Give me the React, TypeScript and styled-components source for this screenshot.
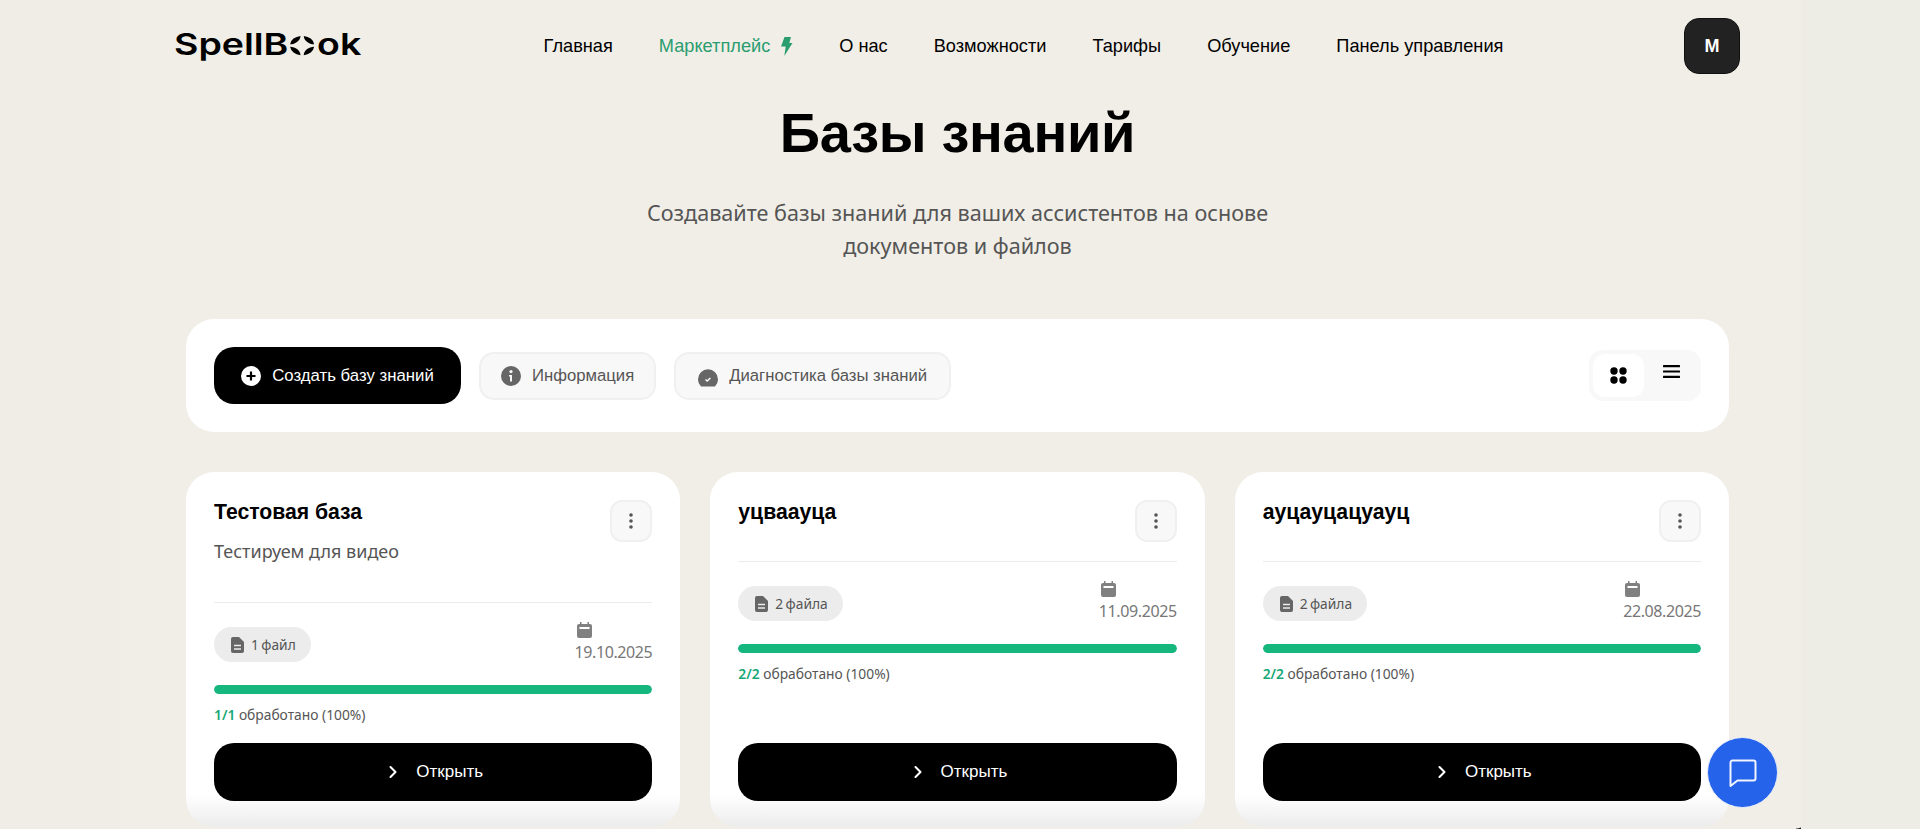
import React from "react";
import styled, { createGlobalStyle } from "styled-components";
import { ChevronRight } from "lucide-react";

const Global = createGlobalStyle`
  html, body { margin: 0; padding: 0; height: 829px; overflow: hidden; }
  body {
    background: linear-gradient(90deg, #efede5 0, #efede5 120px, #f1eee7 122px, #f1eee7 1800px, #eeede5 1802px);
    font-family: "Liberation Sans", Arial, sans-serif;
    color: #000;
  }
`;
const Page = styled.div`
  position: relative;
  height: 829px;
  overflow: hidden;
  padding: 0 191px 0 186px;
  box-sizing: border-box;
`;
const Header = styled.header`
  display: flex;
  align-items: center;
  justify-content: space-between;
  height: 92px;
  margin: 0 -11px 0 -10px;
`;
const Logo = styled.div`
  width: 187px;
`;
const LogoInner = styled.div`
  display: inline-flex;
  align-items: center;
  font-family: Inter, sans-serif;
  font-weight: 600;
  font-size: 30px;
  line-height: 1;
  transform: scaleX(1.25);
  transform-origin: left center;
  margin: -5px 0 0 -2px;
`;
const LogoMark = styled.svg`
  width: 21px;
  height: 23px;
  margin: 3px 1px 0;
`;
const Nav = styled.nav`
  display: flex;
  align-items: center;
  gap: 46px;
  font-size: 18.2px;
  padding-top: 1px;
`;
const NavItem = styled.a<{ $accent?: boolean }>`
  display: flex;
  align-items: center;
  gap: 10px;
  color: ${(p) => (p.$accent ? "#2a9d6f" : "#000")};
`;
const Avatar = styled.div`
  width: 56px;
  height: 56px;
  box-sizing: border-box;
  border-radius: 15px;
  background: #222;
  border: 1px solid #111;
  color: #fff;
  font-weight: 700;
  font-size: 18px;
  display: flex;
  align-items: center;
  justify-content: center;
`;
const Hero = styled.section`
  text-align: center;
  padding-top: 9px;
`;
const Title = styled.h1`
  margin: 0;
  font-size: 56px;
  line-height: 64px;
  font-weight: 700;
  letter-spacing: -0.3px;
`;
const Subtitle = styled.p`
  margin: 31px auto 0;
  width: 660px;
  font-family: "Noto Sans", sans-serif;
  font-size: 21.6px;
  line-height: 33px;
  color: #555;
`;
const Toolbar = styled.section`
  margin-top: 57px;
  height: 113px;
  box-sizing: border-box;
  background: #fff;
  border-radius: 28px;
  padding: 0 28px;
  display: flex;
  align-items: center;
  gap: 18px;
`;
const PrimaryButton = styled.button`
  height: 57px;
  width: 247px;
  border: 0;
  border-radius: 20px;
  background: #000;
  color: #fff;
  font: 16.8px "Liberation Sans", Arial, sans-serif;
  display: flex;
  align-items: center;
  justify-content: center;
  gap: 11px;
`;
const GhostButton = styled.button<{ $wide?: boolean }>`
  height: 48px;
  padding: 0 ${(p) => (p.$wide ? "22px" : "20px")};
  box-sizing: border-box;
  border: 2px solid #f0f0f0;
  border-radius: 15px;
  background: #f8f8f8;
  color: #555;
  font: 16.7px "Liberation Sans", Arial, sans-serif;
  display: flex;
  align-items: center;
  gap: 11px;
`;
const ViewToggle = styled.div`
  margin-left: auto;
  width: 112px;
  height: 51px;
  box-sizing: border-box;
  padding: 4px;
  border-radius: 14px;
  background: #f8f8f8;
  display: flex;
  gap: 2px;
`;
const ViewOption = styled.div<{ $active?: boolean }>`
  width: 52px;
  height: 43px;
  border-radius: 12px;
  background: ${(p) => (p.$active ? "#fff" : "transparent")};
  display: flex;
  align-items: center;
  justify-content: center;
  ${(p) => (p.$active ? "" : "padding-bottom: 8px; box-sizing: border-box;")}
`;
const Cards = styled.section`
  margin-top: 40px;
  display: grid;
  grid-template-columns: repeat(3, 1fr);
  gap: 30px;
`;
const Card = styled.article`
  height: 355px;
  box-sizing: border-box;
  border-radius: 28px;
  padding: 28px 28px 0;
  background: linear-gradient(180deg, #fff 0, #fff 322px, #ececec 100%);
  display: flex;
  flex-direction: column;
`;
const CardHead = styled.div`
  display: flex;
  justify-content: space-between;
  align-items: flex-start;
  padding-bottom: 19px;
  border-bottom: 1px solid #ebebeb;
`;
const CardTitle = styled.h2`
  margin: 0;
  font-size: 21.2px;
  line-height: 24px;
  font-weight: 700;
`;
const CardDesc = styled.p`
  margin: 14px 0 19px;
  font-family: "Noto Sans", sans-serif;
  font-size: 18px;
  line-height: 26px;
  color: #555;
`;
const Kebab = styled.button`
  width: 42px;
  height: 42px;
  flex: none;
  box-sizing: border-box;
  border: 2px solid #f0f0f0;
  border-radius: 12px;
  background: #f8f8f8;
  padding: 0;
  display: flex;
  align-items: center;
  justify-content: center;
`;
const Meta = styled.div`
  margin-top: 21px;
  display: flex;
  justify-content: space-between;
  align-items: flex-end;
`;
const FilePill = styled.div`
  height: 35px;
  padding: 0 15px 0 17px;
  border-radius: 18px;
  background: #ececec;
  color: #555;
  font-family: "Noto Sans", sans-serif;
  font-size: 13.8px;
  word-spacing: -1.2px;
  display: flex;
  align-items: center;
  gap: 7px;
`;
const DateBlock = styled.div`
  display: flex;
  flex-direction: column;
  align-items: flex-start;
  color: #777;
  font-family: "Noto Sans", sans-serif;
  font-size: 16px;
  letter-spacing: -0.4px;
  line-height: 20px;
  gap: 4px;
  margin-top: -2px;
  svg { margin-left: 2px; }
`;
const ProgressBar = styled.div`
  margin-top: 23px;
  height: 9px;
  border-radius: 5px;
  background: #e8e8e8;
  overflow: hidden;
`;
const ProgressFill = styled.div`
  height: 100%;
  background: #16b67f;
  border-radius: 5px;
`;
const ProgressText = styled.div`
  margin-top: 12px;
  font-family: "Noto Sans", sans-serif;
  font-size: 13.8px;
  line-height: 18px;
  color: #555;
  b { color: #16a876; font-weight: 600; }
`;
const OpenButton = styled.button`
  margin-top: auto;
  margin-bottom: 26px;
  height: 58px;
  flex: none;
  border: 0;
  border-radius: 20px;
  background: #000;
  color: #fff;
  font: 17px "Liberation Sans", Arial, sans-serif;
  display: flex;
  align-items: center;
  justify-content: center;
  gap: 13px;
`;
const ChatFab = styled.button`
  position: absolute;
  left: 1707px;
  top: 737px;
  width: 71px;
  height: 71px;
  box-sizing: border-box;
  border-radius: 50%;
  border: 1px solid #e9edf8;
  background: #2563eb;
  color: #fff;
  padding: 0;
  display: flex;
  align-items: center;
  justify-content: center;
`;
const WindowCorner = styled.div`
  position: absolute;
  left: 1796px;
  top: 817px;
  width: 5px;
  height: 12px;
  background: radial-gradient(circle at 0 0, transparent 11px, #222 12px);
`;

const Bolt = () => (
  <svg width="13" height="19" viewBox="0 0 12 19">
    <path d="M4 0h6.500L8.800 6H12L3.800 19l1.400-9.500H0.500z" fill="#2a9d6f" />
  </svg>
);
const PlusIcon = () => (
  <svg width="20" height="20" viewBox="0 0 20 20">
    <circle cx="10" cy="10" r="10" fill="#fff" />
    <path d="M10 5.500v9M5.500 10h9" stroke="#000" strokeWidth="2.200" />
  </svg>
);
const InfoIcon = () => (
  <svg width="20" height="20" viewBox="0 0 20 20">
    <circle cx="10" cy="10" r="10" fill="#666" />
    <circle cx="10" cy="5.600" r="1.600" fill="#f8f8f8" />
    <path d="M8 9h3v6.500H9V10.500H8z" fill="#f8f8f8" />
  </svg>
);
const DiagIcon = () => (
  <svg width="20" height="20" viewBox="0 0 20 20" style={{ marginTop: 4 }}>
    <path d="M3 18.500A10 10 0 1 1 17 18.500z" fill="#666" />
    <path d="M7.500 11.500l1.700 1.500 3.200-3" stroke="#fff" strokeWidth="1.500" fill="none" />
  </svg>
);
const FileIcon = () => (
  <svg width="13" height="16" viewBox="0 0 13 16">
    <path d="M2 0h6l5 5v9a2 2 0 0 1-2 2H2a2 2 0 0 1-2-2V2a2 2 0 0 1 2-2z" fill="#666" />
    <path d="M3 8.500h7M3 12h7" stroke="#ececec" strokeWidth="1.600" />
  </svg>
);
const CalendarIcon = () => (
  <svg width="15" height="16" viewBox="0 0 15 16">
    <path d="M3 0h1.500v2h6V0H12v2h1a2 2 0 0 1 2 2v10a2 2 0 0 1-2 2H2a2 2 0 0 1-2-2V4a2 2 0 0 1 2-2h1z" fill="#808080" />
    <rect x="2.500" y="5" width="10" height="2" fill="#fff" />
  </svg>
);
const DotsIcon = () => (
  <svg width="4" height="16" viewBox="0 0 4 16">
    <circle cx="2" cy="2" r="1.800" fill="#555" />
    <circle cx="2" cy="8" r="1.800" fill="#555" />
    <circle cx="2" cy="14" r="1.800" fill="#555" />
  </svg>
);
const GridIcon = () => (
  <svg width="17" height="17" viewBox="0 0 17 17">
    <circle cx="4" cy="4" r="3.700" />
    <circle cx="13" cy="4" r="3.700" />
    <circle cx="4" cy="13" r="3.700" />
    <circle cx="13" cy="13" r="3.700" />
  </svg>
);
const ListIcon = () => (
  <svg width="17" height="13" viewBox="0 0 17 13">
    <rect width="17" height="2.200" y="0" rx="0.500" />
    <rect width="17" height="2.200" y="5.400" rx="0.500" />
    <rect width="17" height="2.200" y="10.800" rx="0.500" />
  </svg>
);
const ChatIcon = () => (
  <svg width="30" height="28" viewBox="0 0 30 28" fill="none">
    <path
      d="M4.500 1.500h21a2 2 0 0 1 2 2v16a2 2 0 0 1-2 2H9.500L2.500 27V3.500a2 2 0 0 1 2-2z"
      stroke="#f1f5ff"
      strokeWidth="2"
      strokeLinejoin="round"
    />
  </svg>
);

const cards = [
  { title: "Тестовая база", desc: "Тестируем для видео", files: "1 файл", date: "19.10.2025", done: "1/1" },
  { title: "уцваауца", files: "2 файла", date: "11.09.2025", done: "2/2" },
  { title: "ауцауцацуауц", files: "2 файла", date: "22.08.2025", done: "2/2" },
];

export default function App() {
  return (
    <Page>
      <Global />
      <Header>
        <Logo>
          <LogoInner>
            SpellB
            <LogoMark viewBox="0 0 24 24">
              <path d="M10.500 1A11 11 0 0 0 1 10.500C6 10.500 10.500 6 10.500 1zM13.500 1A11 11 0 0 1 23 10.500C18 10.500 13.500 6 13.500 1zM10.500 23A11 11 0 0 1 1 13.500C6 13.500 10.500 18 10.500 23zM13.500 23A11 11 0 0 0 23 13.500C18 13.500 13.500 18 13.500 23z" />
            </LogoMark>
            ok
          </LogoInner>
        </Logo>
        <Nav>
          <NavItem>Главная</NavItem>
          <NavItem $accent>
            Маркетплейс <Bolt />
          </NavItem>
          <NavItem>О нас</NavItem>
          <NavItem>Возможности</NavItem>
          <NavItem>Тарифы</NavItem>
          <NavItem>Обучение</NavItem>
          <NavItem>Панель управления</NavItem>
        </Nav>
        <Avatar>М</Avatar>
      </Header>
      <Hero>
        <Title>Базы знаний</Title>
        <Subtitle>
          Создавайте базы знаний для ваших ассистентов на основе документов и файлов
        </Subtitle>
      </Hero>
      <Toolbar>
        <PrimaryButton>
          <PlusIcon /> Создать базу знаний
        </PrimaryButton>
        <GhostButton>
          <InfoIcon /> Информация
        </GhostButton>
        <GhostButton $wide>
          <DiagIcon /> Диагностика базы знаний
        </GhostButton>
        <ViewToggle>
          <ViewOption $active>
            <GridIcon />
          </ViewOption>
          <ViewOption>
            <ListIcon />
          </ViewOption>
        </ViewToggle>
      </Toolbar>
      <Cards>
        {cards.map((c) => (
          <Card key={c.title}>
            <CardHead>
              <div>
                <CardTitle>{c.title}</CardTitle>
                {c.desc && <CardDesc>{c.desc}</CardDesc>}
              </div>
              <Kebab>
                <DotsIcon />
              </Kebab>
            </CardHead>
            <Meta>
              <FilePill>
                <FileIcon /> {c.files}
              </FilePill>
              <DateBlock>
                <CalendarIcon />
                {c.date}
              </DateBlock>
            </Meta>
            <ProgressBar>
              <ProgressFill style={{ width: "100%" }} />
            </ProgressBar>
            <ProgressText>
              <b>{c.done}</b> обработано (100%)
            </ProgressText>
            <OpenButton>
              <ChevronRight size={20} strokeWidth={2.500} /> Открыть
            </OpenButton>
          </Card>
        ))}
      </Cards>
      <ChatFab>
        <ChatIcon />
      </ChatFab>
      <WindowCorner />
    </Page>
  );
}
